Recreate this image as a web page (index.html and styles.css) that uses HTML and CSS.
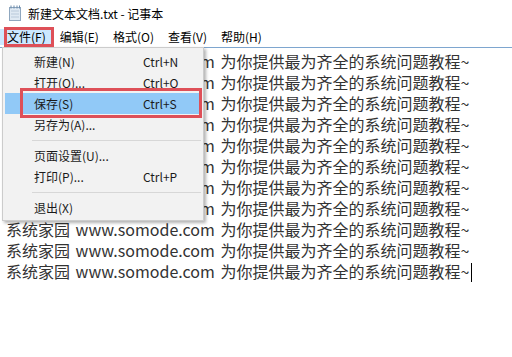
FILE: index.html
```html
<!DOCTYPE html>
<html lang="zh-CN">
<head>
    <meta charset="UTF-8">
    <title>新建文本文档.txt - 记事本</title>
    <link rel="stylesheet" href="styles.css">
</head>
<body>

    <div class="janela">
        <div class="titulo">
            <svg class="icone" width="12" height="16" viewBox="0 0 12 16">
                <rect x="0.5" y="2.5" width="11" height="13" fill="#dfe9f3" stroke="#8fa7bf"/>
                <line x1="2" y1="6" x2="10" y2="6" stroke="#b9c9da"/>
                <line x1="2" y1="9" x2="10" y2="9" stroke="#b9c9da"/>
                <line x1="2" y1="12" x2="10" y2="12" stroke="#b9c9da"/>
                <rect x="1.5" y="0.5" width="1" height="3" fill="#6d8bab"/>
                <rect x="4.5" y="0.5" width="1" height="3" fill="#6d8bab"/>
                <rect x="7.5" y="0.5" width="1" height="3" fill="#6d8bab"/>
                <rect x="10" y="0.5" width="1" height="3" fill="#6d8bab"/>
            </svg>
            <span>新建文本文档.txt - 记事本</span>
        </div>

        <div class="menubar">
            <span class="menu-item ativo">文件(F)</span>
            <span class="menu-item">编辑(E)</span>
            <span class="menu-item">格式(O)</span>
            <span class="menu-item">查看(V)</span>
            <span class="menu-item">帮助(H)</span>
        </div>

        <div class="editor">
            <div class="linha">系统家园 www.somode.com 为你提供最为齐全的系统问题教程~</div>
            <div class="linha">系统家园 www.somode.com 为你提供最为齐全的系统问题教程~</div>
            <div class="linha">系统家园 www.somode.com 为你提供最为齐全的系统问题教程~</div>
            <div class="linha">系统家园 www.somode.com 为你提供最为齐全的系统问题教程~</div>
            <div class="linha">系统家园 www.somode.com 为你提供最为齐全的系统问题教程~</div>
            <div class="linha">系统家园 www.somode.com 为你提供最为齐全的系统问题教程~</div>
            <div class="linha">系统家园 www.somode.com 为你提供最为齐全的系统问题教程~</div>
            <div class="linha">系统家园 www.somode.com 为你提供最为齐全的系统问题教程~</div>
            <div class="linha">系统家园 www.somode.com 为你提供最为齐全的系统问题教程~</div>
            <div class="linha">系统家园 www.somode.com 为你提供最为齐全的系统问题教程~</div>
            <div class="linha">系统家园 www.somode.com 为你提供最为齐全的系统问题教程~<span class="cursor"></span></div>
        </div>

        <div class="dropdown">
            <div class="opcao"><span>新建(N)</span><span>Ctrl+N</span></div>
            <div class="opcao"><span>打开(O)...</span><span>Ctrl+O</span></div>
            <div class="opcao selecionada"><span>保存(S)</span><span>Ctrl+S</span></div>
            <div class="opcao"><span>另存为(A)...</span><span></span></div>
            <div class="separador"></div>
            <div class="opcao"><span>页面设置(U)...</span><span></span></div>
            <div class="opcao"><span>打印(P)...</span><span>Ctrl+P</span></div>
            <div class="separador"></div>
            <div class="opcao"><span>退出(X)</span><span></span></div>
        </div>

        <div class="marca marca-arquivo"></div>
        <div class="marca marca-salvar"></div>
    </div>

</body>
</html>
```

FILE: styles.css
```css
body {
    margin: 0;
    background: white;
    overflow: hidden;
    font-family: "Noto Sans CJK SC", sans-serif;
    color: #000;
}

.janela {
    position: relative;
    width: 512px;
    height: 357px;
}

.titulo {
    display: flex;
    align-items: center;
    gap: 7px;
    height: 26px;
    padding-left: 9px;
    font-size: 12px;
}

.icone {
    display: block;
}

.menubar {
    display: flex;
    height: 18px;
    padding-top: 3px;
    border-bottom: 1px solid #7ea6cf;
}

.menu-item {
    height: 16px;
    line-height: 16px;
    padding: 0 7px;
    font-size: 12px;
}

.menu-item.ativo {
    background: #cce8ff;
}

.editor {
    padding: 3px 6px;
    font-size: 16px;
    line-height: 21px;
    color: #333;
    word-spacing: 2px;
}

.linha {
    white-space: nowrap;
}

.cursor {
    display: inline-block;
    width: 1px;
    height: 19px;
    background: #000;
    vertical-align: -4px;
    margin-left: 2px;
}

.dropdown {
    position: absolute;
    left: 2px;
    top: 47px;
    width: 196px;
    padding: 3px 2px 2px;
    background: #f2f2f2;
    border: 1px solid #cccccc;
    box-shadow: 2px 2px 3px rgba(0, 0, 0, 0.3);
    font-size: 12px;
    color: #1a1a1a;
}

.opcao {
    display: grid;
    grid-template-columns: 109px 1fr;
    align-items: center;
    height: 21px;
    padding-left: 29px;
}

.opcao.selecionada {
    background: #91c9f7;
}

.separador {
    height: 1px;
    margin: 5px 0 4px 27px;
    background: #d7d7d7;
}

.marca {
    position: absolute;
    box-sizing: border-box;
    border: 3px solid #de5058;
}

.marca-arquivo {
    left: 4px;
    top: 27px;
    width: 50px;
    height: 20px;
}

.marca-salvar {
    left: 20px;
    top: 88px;
    width: 182px;
    height: 30px;
}
```
